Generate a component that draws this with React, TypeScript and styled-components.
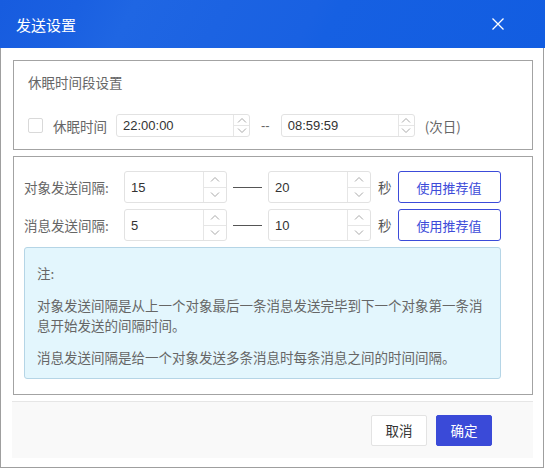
import styled, { createGlobalStyle } from "styled-components";

const GlobalStyle = createGlobalStyle`
  * { box-sizing: border-box; }
  body {
    margin: 0;
    background: #fff;
    font-family: "Liberation Sans", "Noto Sans CJK SC", sans-serif;
  }
`;

const Window = styled.div`
  width: 545px;
  height: 468px;
  display: flex;
  flex-direction: column;
  background: #fff;
`;

const Header = styled.div`
  height: 48px;
  flex-shrink: 0;
  display: flex;
  align-items: center;
  justify-content: space-between;
  padding: 0 41px 0 16px;
  background: linear-gradient(118deg, #175cdf 0%, #1a60e1 14%, #1f66e3 24%, #1c63e2 40%, #1961e2 56%, #1660e2 60%, #125de1 100%);
  color: #fff;
  font-family: "Noto Sans CJK SC", sans-serif;
  font-size: 15px;
`;

const CloseBtn = styled.div`
  width: 12px;
  height: 12px;
  display: flex;
`;

const Body = styled.div`
  flex: 1;
  width: 544px;
  display: flex;
  flex-direction: column;
  gap: 6px;
  padding: 12px 10px 9px 11px;
  border: 1px solid #9f9f9f;
  border-top: none;
`;

const Panel = styled.div<{ $h: number; $pad: string }>`
  height: ${(p) => p.$h}px;
  border: 1px solid #a3a3a3;
  margin-left: 1px;
  padding: ${(p) => p.$pad};
  display: flex;
  flex-direction: column;
`;

const SectionTitle = styled.div`
  font-family: "Noto Sans CJK SC", sans-serif;
  font-size: 13.5px;
  line-height: 18px;
  color: #666;
`;

const Row = styled.div<{ $gap?: number }>`
  display: flex;
  align-items: center;
`;

const Checkbox = styled.div`
  width: 15px;
  height: 15px;
  border: 1px solid #d9d9d9;
  border-radius: 2px;
  background: #fff;
  margin-right: 10px;
`;

const Label = styled.span<{ $w?: number }>`
  font-family: "Noto Sans CJK SC", sans-serif;
  font-size: 13.5px;
  color: #666;
  ${(p) => (p.$w ? `width: ${p.$w}px;` : "")}
  flex-shrink: 0;
`;

const NumBox = styled.div<{ $w: number; $h: number; $spin: number }>`
  width: ${(p) => p.$w}px;
  height: ${(p) => p.$h}px;
  border: 1px solid #e2e2e2;
  border-radius: 3px;
  display: flex;
  background: #fff;
  flex-shrink: 0;

  .value {
    flex: 1;
    display: flex;
    align-items: center;
    padding-left: 6px;
    font-size: 13px;
    color: #333;
  }
  .spin {
    width: ${(p) => p.$spin}px;
    border-left: 1px solid #e6e6e6;
    display: flex;
    flex-direction: column;
  }
  .spin > div {
    flex: 1;
    display: flex;
    align-items: center;
    justify-content: center;
  }
  .spin > div + div {
    border-top: 1px solid #e6e6e6;
  }
`;

const Sep = styled.span`
  font-size: 13px;
  color: #666;
  margin: 0 11px;
`;

const Dash = styled.div`
  width: 29px;
  height: 1px;
  background: #555;
  margin: 0 6px;
  flex-shrink: 0;
`;

const Unit = styled.span`
  font-family: "Noto Sans CJK SC", sans-serif;
  font-size: 13.5px;
  color: #555;
  margin: 0 6px 0 7px;
`;

const OutlineBtn = styled.div`
  width: 103px;
  height: 32px;
  border: 1px solid #3c4bd9;
  border-radius: 3px;
  display: flex;
  align-items: center;
  justify-content: center;
  font-family: "Noto Sans CJK SC", sans-serif;
  font-size: 13px;
  color: #3c4bd9;
`;

const Note = styled.div`
  width: 477px;
  margin-top: 6px;
  padding: 15px 12px 11px 12px;
  background: #e3f6fd;
  border: 1px solid #b5d5e6;
  border-radius: 3px;
  font-family: "Noto Sans CJK SC", sans-serif;
  font-size: 13.5px;
  line-height: 20px;
  color: #666;

  p { margin: 0; }
  p + p { margin-top: 12px; }
`;

const Footer = styled.div`
  height: 57px;
  border-top: 1px solid #e6e6e6;
  background: #f9f9f9;
  display: flex;
  align-items: center;
  justify-content: flex-end;
  gap: 9px;
  padding-right: 41px;
`;

const FooterBtn = styled.div<{ $primary?: boolean }>`
  width: 56px;
  height: 31px;
  border-radius: 2px;
  display: flex;
  align-items: center;
  justify-content: center;
  font-family: "Noto Sans CJK SC", sans-serif;
  font-size: 13.5px;
  background: ${(p) => (p.$primary ? "#3a4ad8" : "#fff")};
  border: 1px solid ${(p) => (p.$primary ? "#3a4ad8" : "#e3e3e3")};
  color: ${(p) => (p.$primary ? "#fff" : "#333")};
`;

function Chevron({ up }: { up?: boolean }) {
  return (
    <svg width="10" height="6" viewBox="0 0 10 6">
      <path
        d={up ? "M1 5.5 L5 1.5 L9 5.5" : "M1 0.5 L5 4.5 L9 0.5"}
        fill="none"
        stroke="#a8a8a8"
        strokeWidth="1"
      />
    </svg>
  );
}

function Spinner({ value, w, h, spin }: { value: string; w: number; h: number; spin: number }) {
  return (
    <NumBox $w={w} $h={h} $spin={spin}>
      <div className="value">{value}</div>
      <div className="spin">
        <div><Chevron up /></div>
        <div><Chevron /></div>
      </div>
    </NumBox>
  );
}

function IntervalRow({ label, from, to }: { label: string; from: string; to: string }) {
  return (
    <Row>
      <Label $w={100}>{label}</Label>
      <Spinner value={from} w={103} h={32} spin={23} />
      <Dash />
      <Spinner value={to} w={103} h={32} spin={23} />
      <Unit>秒</Unit>
      <OutlineBtn>使用推荐值</OutlineBtn>
    </Row>
  );
}

export default function App() {
  return (
    <>
      <GlobalStyle />
      <Window>
        <Header>
          <span>发送设置</span>
          <CloseBtn>
            <svg width="12" height="12" viewBox="0 0 12 12">
              <path d="M0.5 0.5 L11.5 11.5 M11.5 0.5 L0.5 11.5" stroke="#fff" strokeWidth="1.3" />
            </svg>
          </CloseBtn>
        </Header>
        <Body>
          <Panel $h={90} $pad="12px 14px 0 14px">
            <SectionTitle>休眠时间段设置</SectionTitle>
            <Row style={{ marginTop: 23 }}>
              <Checkbox />
              <Label $w={63}>休眠时间</Label>
              <Spinner value="22:00:00" w={134} h={23} spin={16} />
              <Sep>--</Sep>
              <Spinner value="08:59:59" w={134} h={23} spin={16} />
              <Label style={{ marginLeft: 10 }}>(次日)</Label>
            </Row>
          </Panel>
          <Panel $h={239} $pad="14px 10px">
            <IntervalRow label="对象发送间隔:" from="15" to="20" />
            <div style={{ height: 6 }} />
            <IntervalRow label="消息发送间隔:" from="5" to="10" />
            <Note>
              <p>注:</p>
              <p>对象发送间隔是从上一个对象最后一条消息发送完毕到下一个对象第一条消息开始发送的间隔时间。</p>
              <p>消息发送间隔是给一个对象发送多条消息时每条消息之间的时间间隔。</p>
            </Note>
          </Panel>
          <Footer>
            <FooterBtn>取消</FooterBtn>
            <FooterBtn $primary>确定</FooterBtn>
          </Footer>
        </Body>
      </Window>
    </>
  );
}
